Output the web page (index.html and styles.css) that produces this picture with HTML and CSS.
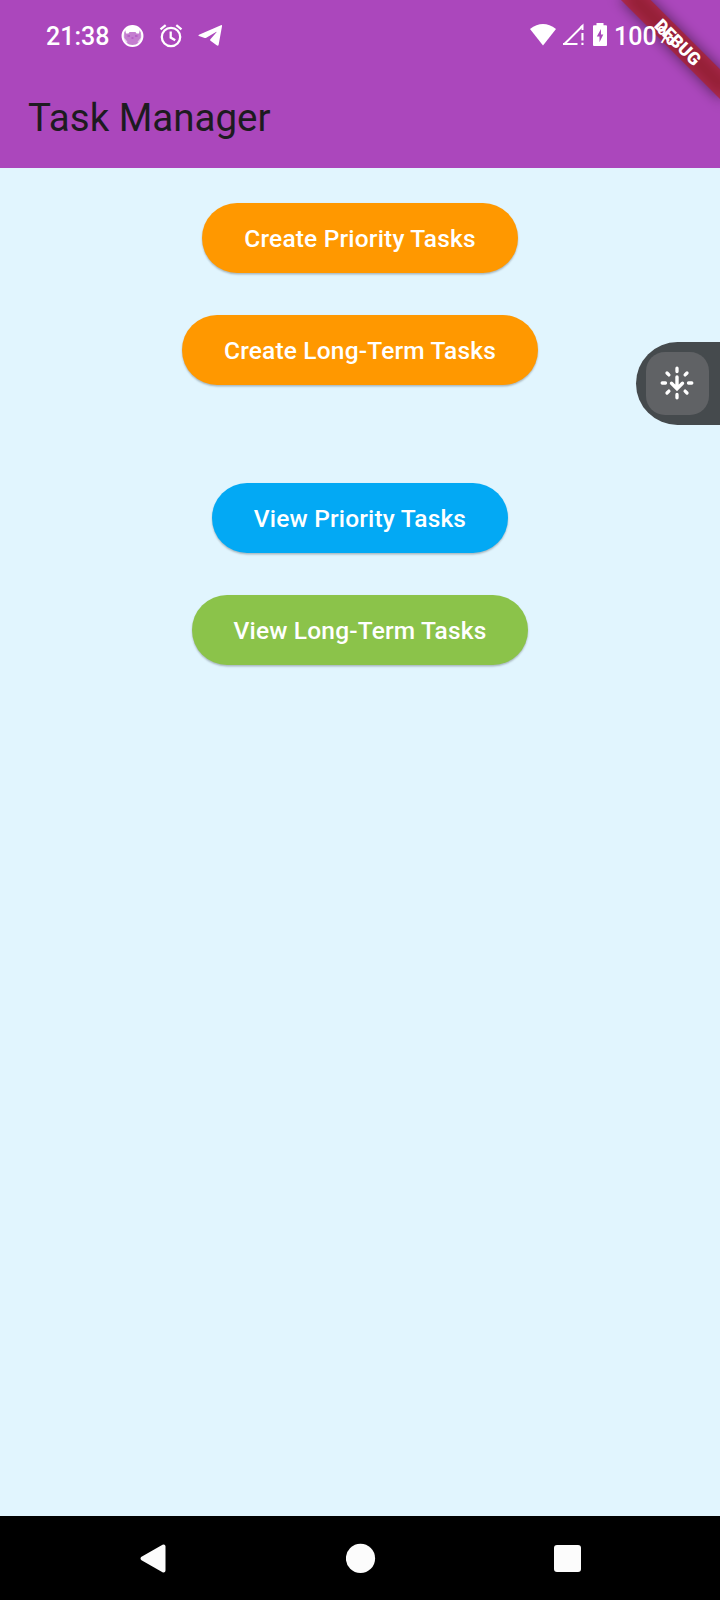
FILE: index.html
```
<!DOCTYPE html>
<html lang="en">
<head>
<meta charset="utf-8">
<title>Task Manager</title>
<link rel="stylesheet" href="styles.css">
</head>
<body>
<div class="screen">
  <header class="top">
    <div class="status">
      <div class="status-left">
        <span class="clock">21:38</span>
        <svg class="face" width="24" height="24" viewBox="0 0 24 24"><circle cx="11.500" cy="12" r="10" fill="#fff" fill-opacity=".3" stroke="#fff" stroke-width="1.900"/><path d="M4 5Q11.500-2 19 5L18 9.500H15.500L14.500 8H8.500L7.500 9.500H5Z" fill="#fff"/><path d="M2.500 9V14L6 18.500M20.500 9V14L17 18.500" fill="none" stroke="#fff" stroke-opacity=".6" stroke-width="1.500"/><path d="M6.500 12h2.500M14 12h2.500M10.500 14h2" stroke="#ab47bc" stroke-opacity=".7" stroke-width="1.500"/></svg>
        <svg class="alarm" width="24" height="24" viewBox="0 0 24 24" fill="none" stroke="#fff" stroke-width="2.300"><circle cx="12" cy="13" r="9.200"/><path d="M1.500 5.300L6.700 1.200M22.500 5.300L17.300 1.200M11.700 7.500v6l4.500 2.800"/></svg>
        <svg class="plane" width="26" height="24" viewBox="0 0 26 24"><path d="M23.900 1.200Q25.300.7 25 2.300L21.700 20.500Q21.300 22.400 19.700 21.300L13.500 16.800Q12.600 16 13.400 15.200L19.500 8.200Q19.800 7.500 19 7.900L9.300 13.800Q8.500 14.200 7.700 14L2 12.100Q.5 11.400 2 10.700Z" fill="#fff"/></svg>
      </div>
      <div class="status-right">
        <svg width="28" height="24" viewBox="0 0 28 24"><path d="M1 6Q14-4 27 6L14 22.500Z" fill="#fff"/></svg>
        <svg class="signal" width="24" height="24" viewBox="0 0 24 24"><path d="M2.700 20.800L20.500 3M1 20.900H15.500" fill="none" stroke="#fff" stroke-width="2"/><path d="M21.500.5V7H19.500V4.500L17.500 4.500ZM19.400 10h2.100v7.500h-2.100zM19.400 19.700h2.100v2.200h-2.100z" fill="#fff"/></svg>
        <svg class="battery" width="16" height="24" viewBox="0 0 16 24"><path d="M4.500 0h7v2.300H14q1 0 1 1V22q0 1-1 1H2Q1 23 1 22V3.300Q1 2.300 2 2.300H4.500Z" fill="#fff"/><path d="M9 6L4.800 13.500H7.500V19.200L11.300 11.500H9Z" fill="#ab47bc"/></svg>
        <span class="percent">100%</span>
      </div>
    </div>
    <h1 class="title">Task Manager</h1>
    <div class="banner"><div class="ribbon"><span>DEBUG</span></div></div>
  </header>
  <main class="content">
    <button class="btn orange">Create Priority Tasks</button>
    <button class="btn orange">Create Long-Term Tasks</button>
    <button class="btn blue">View Priority Tasks</button>
    <button class="btn green">View Long-Term Tasks</button>
  </main>
  <div class="floater">
    <div class="floater-key">
      <svg width="36" height="36" viewBox="0 0 36 36" fill="none" stroke="#fff" stroke-width="3.300" stroke-linecap="round"><path d="M18 3.200V6.500M18 29.500V32.800M3.200 18H6.500M29.500 18H32.800M8 8l1.900 1.900M28 8l-1.900 1.900M8 28l1.900-1.900M28 28l-1.900-1.900"/><path d="M18 12V23.500M12.500 18.300L18 23.800L23.500 18.300" stroke-width="3.400"/></svg>
    </div>
  </div>
  <nav class="nav">
    <svg width="30" height="32" viewBox="0 0 30 32"><path d="M25.500 4.500V28.500L4.500 16.500Z" fill="#fcfcfc" stroke="#fcfcfc" stroke-width="4" stroke-linejoin="round"/></svg>
    <svg width="30" height="30" viewBox="0 0 30 30"><circle cx="14.500" cy="15.400" r="14.600" fill="#fcfcfc"/></svg>
    <svg width="28" height="28" viewBox="0 0 28 28"><rect x="0" y="1" width="27" height="27" rx="3" fill="#fcfcfc"/></svg>
  </nav>
</div>
</body>
</html>
```
FILE: styles.css
```
body {
  margin: 0;
  font-family: Roboto, "Liberation Sans", sans-serif;
}
.screen {
  position: relative;
  width: 720px;
  height: 1600px;
  display: flex;
  flex-direction: column;
  overflow: hidden;
  background: #e1f5fe;
}
.top {
  position: relative;
  height: 168px;
  background: #ab47bc;
}
.status {
  position: relative;
  z-index: 2;
  height: 70px;
  box-sizing: border-box;
  padding: 0 12px 0 46px;
  display: flex;
  justify-content: space-between;
  align-items: center;
  color: #fff;
  font-size: 25px;
  font-weight: 500;
  line-height: 30px;
}
.status svg {
  display: block;
}
.status-left,
.status-right {
  display: flex;
  align-items: center;
}
.status-left {
  padding-top: 1px;
}
.status-right {
  width: 179px;
}
.clock {
  width: 75px;
  padding-top: 2px;
}
.alarm {
  margin-left: 14px;
}
.plane {
  margin-left: 14px;
}
.signal {
  margin-left: 5px;
}
.battery {
  margin-left: 6px;
}
.percent {
  margin-left: 6px;
  padding-top: 3px;
}
.title {
  margin: 0;
  padding-left: 28px;
  font-size: 38.5px;
  font-weight: 400;
  line-height: 96px;
  color: #1d1b20;
}
.banner {
  position: absolute;
  top: 0;
  right: 0;
  width: 130px;
  height: 130px;
  overflow: hidden;
}
/* Corner strip, rotated about the top right corner of the screen */
.ribbon {
  position: absolute;
  left: 60px;
  top: 49px;
  width: 140px;
  height: 21px;
  transform-origin: 70px -49px;
  transform: rotate(45deg);
  text-align: center;
  color: #fff;
  font-size: 17.85px;
  font-weight: 900;
  line-height: 21px;
}
.ribbon::before,
.ribbon::after {
  content: "";
  position: absolute;
  inset: 0;
}
.ribbon::before {
  background: rgba(0, 0, 0, 0.5);
  filter: blur(7px);
}
.ribbon::after {
  background: rgba(183, 28, 28, 0.63);
}
.ribbon span {
  position: relative;
  z-index: 1;
}
.content {
  flex: 1;
  display: flex;
  flex-direction: column;
  align-items: center;
  gap: 42px;
  padding-top: 35px;
}
.btn {
  height: 70px;
  padding: 2px 42px 0;
  border: 0;
  border-radius: 35px;
  color: #fff;
  font-family: inherit;
  font-size: 24.5px;
  font-weight: 500;
  letter-spacing: 0.175px;
  line-height: 68px;
  white-space: nowrap;
  box-shadow: 0 1.5px 2px rgba(0, 0, 0, 0.25);
}
.orange {
  background: #ff9800;
}
.blue {
  margin-top: 56px;
  background: #03a9f4;
}
.green {
  background: #8bc34a;
}
.floater {
  position: absolute;
  top: 342px;
  right: 0;
  width: 84px;
  height: 83px;
  box-sizing: border-box;
  padding: 10px;
  border-radius: 42px 0 0 42px;
  background: #454a4d;
}
.floater-key {
  width: 63px;
  height: 63px;
  box-sizing: border-box;
  padding: 0 2px 2px 0;
  display: flex;
  align-items: center;
  justify-content: center;
  border-radius: 19px;
  background: #606265;
}
.nav {
  height: 84px;
  box-sizing: border-box;
  padding: 0 138px;
  display: flex;
  align-items: center;
  justify-content: space-between;
  background: #000;
}
```
